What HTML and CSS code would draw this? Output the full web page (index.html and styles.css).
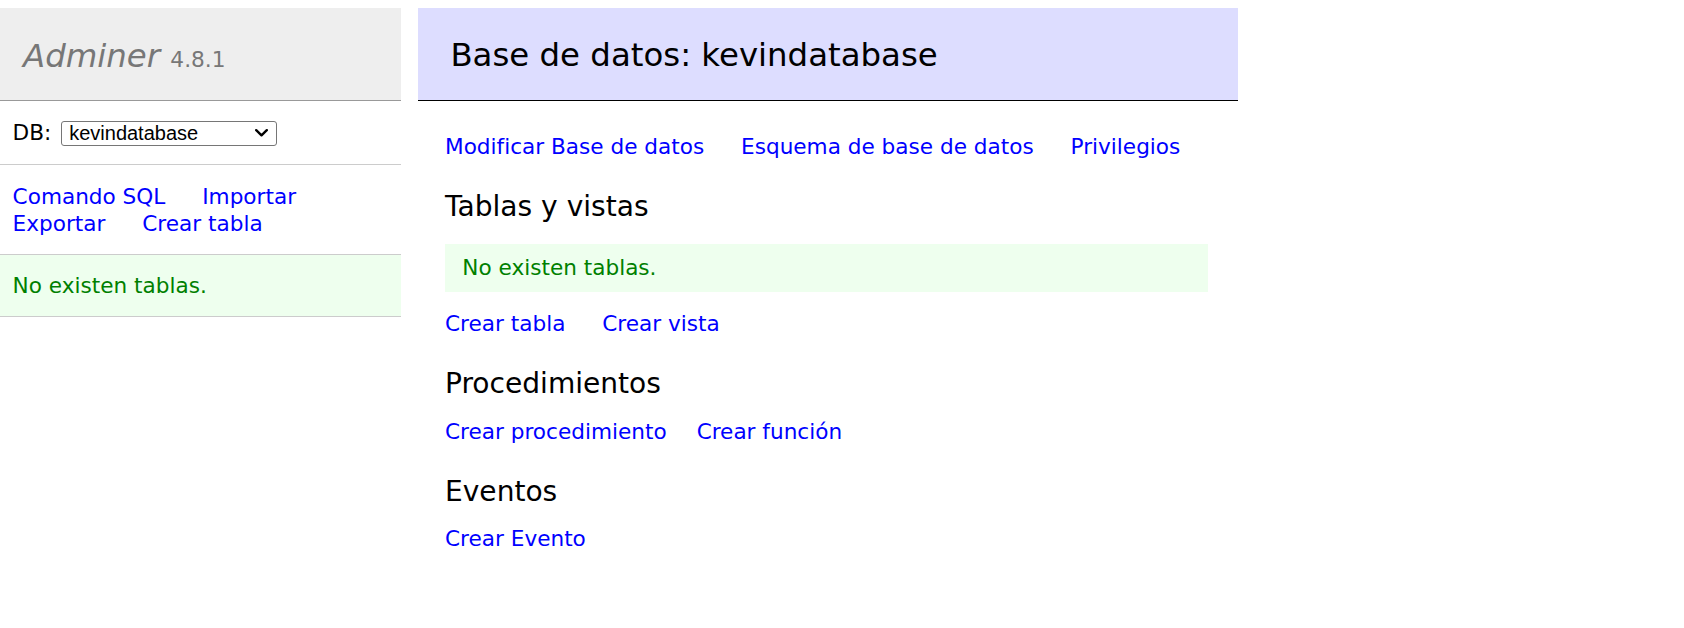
FILE: index.html
```html
<!DOCTYPE html>
<html lang="es">
<head>
<meta charset="utf-8">
<title>Base de datos: kevindatabase - Adminer</title>
<link rel="stylesheet" href="styles.css">
</head>
<body>
<div class="page">
  <aside class="menu">
    <h1 class="brand"><a class="brand-link" href="#">Adminer</a> <span class="version">4.8.1</span></h1>
    <p class="menu-row db-row">DB:&nbsp;<span class="select"><span class="select-text">kevindatabase</span><svg class="chevron" width="13" height="8" viewBox="0 0 13 8"><path d="M1.2 1.2 L6.5 6.3 L11.8 1.2" fill="none" stroke="#000" stroke-width="2.4" stroke-linecap="round" stroke-linejoin="round"/></svg></span></p>
    <p class="menu-row links"><a href="#">Comando SQL</a>
<a href="#">Importar</a>
<a href="#">Exportar</a>
<a href="#">Crear tabla</a></p>
    <p class="menu-row message">No existen tablas.</p>
  </aside>
  <main class="content">
    <h2 class="title">Base de datos: kevindatabase</h2>
    <div class="body">
      <p class="links first"><a href="#">Modificar Base de datos</a>
<a href="#">Esquema de base de datos</a>
<a href="#">Privilegios</a></p>
      <h3 class="section">Tablas y vistas</h3>
      <p class="message box">No existen tablas.</p>
      <p class="links"><a href="#">Crear tabla</a>
<a href="#">Crear vista</a></p>
      <h3 class="section">Procedimientos</h3>
      <p class="links"><a href="#">Crear procedimiento</a><a href="#">Crear función</a></p>
      <h3 class="section">Eventos</h3>
      <p class="links"><a href="#">Crear Evento</a></p>
    </div>
  </main>
</div>
</body>
</html>
```

FILE: styles.css
```css
html, body {
  margin: 0;
  padding: 0;
  background: #fff;
}

body {
  color: #000;
  font-family: "DejaVu Sans", Verdana, sans-serif;
  font-size: 21.6px;
  line-height: 1.25;
}

a {
  color: #00f;
  text-decoration: none;
}

.page {
  display: flex;
  align-items: flex-start;
  padding-top: 8px;
}

/* ---------- left menu ---------- */
.menu {
  width: 401px;
  flex: none;
}

.brand {
  margin: 0;
  font-size: 32.4px;
  font-weight: normal;
  line-height: 1.25;
  color: #777;
  background: #eee;
  padding: 28px 0 23.84px 23px;
  border-bottom: 1px solid #999;
}

.brand-link {
  color: #777;
  font-style: italic;
}

.version {
  font-size: 21.7px;
  color: #777;
}

.menu-row {
  margin: 0;
  padding: 17.28px 12.6px;
  border-bottom: 1px solid #ccc;
}

.db-row {
  display: flex;
  align-items: center;
  min-height: 29px;
  padding-top: 17.5px;
  padding-bottom: 16.5px;
}

.select {
  box-sizing: border-box;
  display: inline-flex;
  align-items: center;
  justify-content: space-between;
  width: 216px;
  height: 25px;
  margin-left: 3px;
  padding: 0 7px 0 7px;
  border: 1px solid #767676;
  border-radius: 3px;
  background: #fff;
  font-family: "Liberation Sans", Arial, sans-serif;
  font-size: 20px;
  line-height: 23px;
  color: #000;
}

.chevron {
  display: block;
  margin-right: 1px;
}

.links a {
  white-space: nowrap;
  margin-right: 30px;
}

.menu .links {
  padding-top: 18.28px;
  padding-bottom: 16.28px;
}

.message {
  color: #008000;
  background: #efe;
}

.menu .message {
  padding-top: 18.28px;
  padding-bottom: 16.28px;
}

/* ---------- content ---------- */
.content {
  margin-left: 17px;
  width: 820px;
  flex: none;
}

.title {
  margin: 0;
  font-size: 32.4px;
  font-weight: normal;
  line-height: 1.25;
  color: #000;
  background: #ddf;
  padding: 27px 0 24.84px 32.4px;
  border-bottom: 1px solid #000;
}

.body {
  padding-left: 27px;
}

.body .links {
  margin: 17.28px 0 -2px;
  padding-top: 2px;
}

.body .links.first {
  margin-top: 30.5px;
}

.section {
  margin: 28.08px 0 -2px;
  padding-top: 2px;
  font-size: 28.08px;
  font-weight: normal;
  line-height: 1.25;
}

.box {
  margin: 21.6px 30px 0 0;
  padding: 11.8px 17.28px 9.8px;
}
```
